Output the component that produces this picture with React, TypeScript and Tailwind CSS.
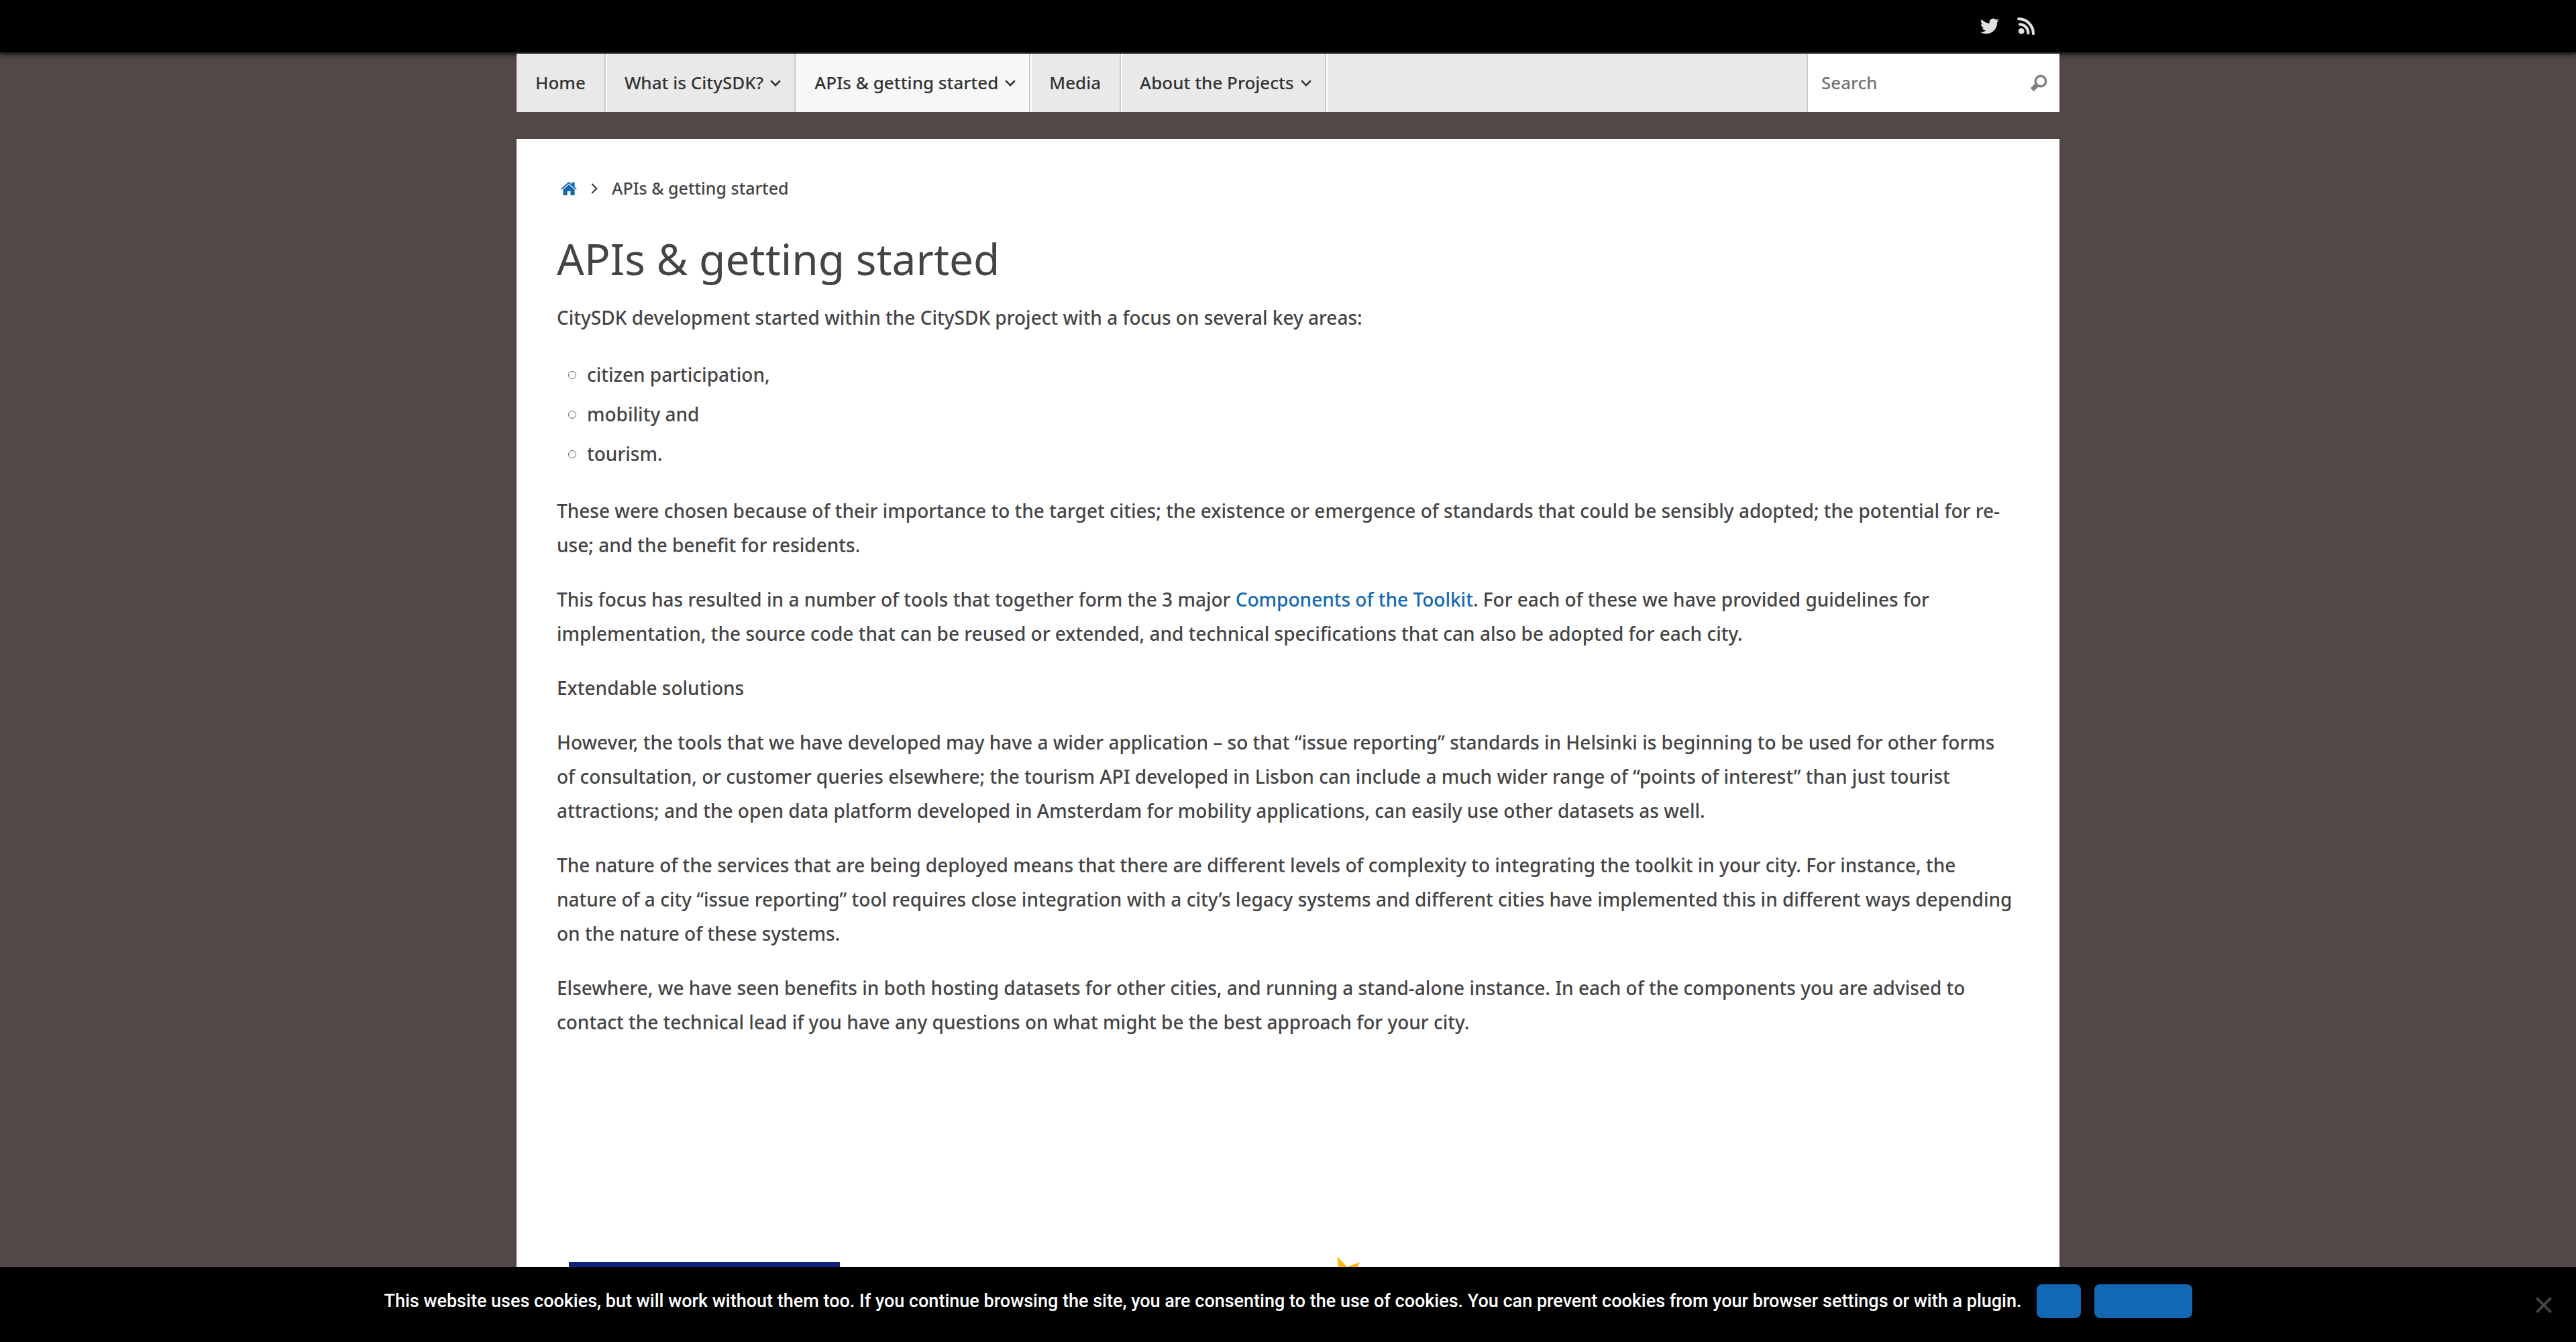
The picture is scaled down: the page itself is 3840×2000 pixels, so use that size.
import type { ReactNode } from "react";

type NavItem = { label: string; menu?: boolean; active?: boolean };

const navItems: NavItem[] = [
  { label: "Home" },
  { label: "What is CitySDK?", menu: true },
  { label: "APIs & getting started", menu: true, active: true },
  { label: "Media" },
  { label: "About the Projects", menu: true },
];

const areas = ["citizen participation,", "mobility and", "tourism."];

function ChevronDown() {
  return (
    <svg viewBox="0 0 16 10" className="ml-2.5 h-2.5 w-4 shrink-0" fill="none" stroke="currentColor" strokeWidth="2.6" aria-hidden="true">
      <path d="M1.2 1.2 8 8.2l6.8-7" />
    </svg>
  );
}

function ChevronRight() {
  return (
    <svg viewBox="0 0 10 16" className="h-4 w-2.5 shrink-0" fill="none" stroke="currentColor" strokeWidth="2.4" aria-hidden="true">
      <path d="M1.4 1 8.2 8l-6.8 7" />
    </svg>
  );
}

function HomeIcon() {
  return (
    <svg viewBox="0 0 24 20" className="h-5 w-6" fill="currentColor" aria-hidden="true">
      <path d="M11.3.5a1.1 1.1 0 0 1 1.4 0L16 3.4V.8h4.600v6.600l3.200 2.900-1.200 1.400L12 2.400 1.400 11.700.2 10.300z" />
      <path d="M12 4.1 20.6 11.6V19a1 1 0 0 1-1 1h-5.1v-6H9.6v6H4.4a1 1 0 0 1-1-1v-7.4z" />
    </svg>
  );
}

function TwitterIcon() {
  return (
    <svg viewBox="0 0 24 24" className="h-7 w-7" fill="currentColor" aria-hidden="true">
      <path d="M23.95 4.57a10 10 0 0 1-2.82.77 4.96 4.96 0 0 0 2.16-2.72c-.95.55-2 .95-3.13 1.18a4.92 4.92 0 0 0-8.38 4.48C7.69 8.1 4.07 6.13 1.64 3.16a4.82 4.82 0 0 0-.67 2.48c0 1.71.87 3.21 2.19 4.1a4.9 4.9 0 0 1-2.23-.62v.06a4.92 4.92 0 0 0 3.95 4.83 5 5 0 0 1-2.21.08 4.94 4.94 0 0 0 4.6 3.42A9.87 9.87 0 0 1 0 19.54a13.99 13.99 0 0 0 7.56 2.21c9.05 0 14-7.5 14-13.99 0-.21 0-.42-.02-.63a9.94 9.94 0 0 0 2.41-2.56z" />
    </svg>
  );
}

function RssIcon() {
  return (
    <svg viewBox="0 0 28 28" className="h-7 w-7" fill="none" stroke="currentColor" strokeLinecap="round" aria-hidden="true">
      <circle cx="7.2" cy="21.4" r="4.4" fill="currentColor" stroke="none" />
      <path d="M5 11.4A12.6 12.6 0 0 1 17.4 24.4" strokeWidth="4.2" />
      <path d="M3.2 3.2A21.8 21.8 0 0 1 25 25.2" strokeWidth="4.2" />
    </svg>
  );
}

function SearchIcon() {
  return (
    <svg viewBox="0 0 26 26" className="h-[26px] w-[26px]" fill="none" stroke="currentColor" aria-hidden="true">
      <circle cx="16" cy="10" r="7.8" strokeWidth="3.4" />
      <path d="M11.5 14.5 3.2 22.8" strokeWidth="7" />
    </svg>
  );
}

function P({ children }: { children: ReactNode }) {
  return <p className="mb-[30px]">{children}</p>;
}

export default function App() {
  return (
    <div className="h-screen overflow-hidden bg-[#524845] font-['Noto_Sans','Open_Sans',sans-serif] text-[28px] leading-[51px] font-medium text-[#444444]">
      <header className="relative h-20 border-b-2 border-[#222222] bg-black shadow-[0_0_8px_#000000]">
        <div className="mx-auto flex h-full max-w-[2300px] items-center justify-end gap-[26px] pr-9 text-[#e0e0e0]">
          <a href="#twitter" aria-label="Twitter"><TwitterIcon /></a>
          <a href="#rss" aria-label="RSS"><RssIcon /></a>
        </div>
      </header>

      <nav className="relative mx-auto flex h-[87px] max-w-[2300px] items-stretch bg-[#e9e9e9] text-[26px] text-[#333333]">
        {navItems.map((item) => (
          <a
            key={item.label}
            href="#menu"
            className={
              "flex items-center border-r-2 border-[#cccccc] pl-7 whitespace-nowrap shadow-[2px_0_0_#ffffff] " +
              (item.active ? "bg-[#f7f7f7] " : "") +
              (item.menu ? "pr-5" : "pr-7")
            }
          >
            {item.label}
            {item.menu && <ChevronDown />}
          </a>
        ))}
        <form className="ml-auto flex w-[377px] items-center border-l-2 border-[#cccccc] bg-white pr-[18px] pl-5">
          <input type="search" aria-label="Search" placeholder="Search" className="min-w-0 flex-1 bg-transparent outline-none placeholder:text-[#757575]" />
          <button type="button" aria-label="Submit search" className="text-[#808080]"><SearchIcon /></button>
        </form>
      </nav>

      <main className="mx-auto mt-10 max-w-[2300px] bg-white px-[60px] pt-12 pb-40">
        <div className="flex items-center pl-1.5 text-[25px]">
          <a href="#home" aria-label="Home" className="text-[#1268b3]"><HomeIcon /></a>
          <span className="mx-[21px]"><ChevronRight /></span>
          <span>APIs &amp; getting started</span>
        </div>

        <h1 className="mt-10 text-[64px] leading-[80px] font-normal">APIs &amp; getting started</h1>
        <p className="mt-[22px] mb-[30px]">CitySDK development started within the CitySDK project with a focus on several key areas:</p>
        <ul className="mb-[30px]">
          {areas.map((area) => (
            <li key={area} className="flex h-[59px] items-center pl-[17px]">
              <span className="mr-4 h-3 w-3 rounded-full border border-[#666666]" />
              {area}
            </li>
          ))}
        </ul>

        <P>
          These were chosen because of their importance to the target cities; the existence or emergence of standards that could be sensibly adopted; the potential for re-use; and the benefit for residents.
        </P>
        <P>
          This focus has resulted in a number of tools that together form the 3 major <a href="#toolkit" className="text-[#1268b3]">Components of the Toolkit</a>. For each of these we have provided guidelines for implementation, the source code that can be reused or extended, and technical specifications that can also be adopted for each city.
        </P>
        <P>Extendable solutions</P>
        <P>
          However, the tools that we have developed may have a wider application – so that “issue reporting” standards in Helsinki is beginning to be used for other forms of&nbsp;consultation, or customer queries elsewhere; the tourism API developed in Lisbon can include a much wider range of “points of interest” than just tourist attractions; and the open data platform developed in Amsterdam for mobility applications, can easily use other datasets as well.
        </P>
        <P>
          The nature of the services that are being deployed means that there are different levels of complexity to integrating the toolkit in your city. For instance, the nature of a city “issue reporting” tool requires close integration with a city’s legacy systems and different cities have implemented this in different ways depending on the nature of these systems.
        </P>
        <P>
          Elsewhere, we have seen benefits in both hosting datasets for other cities, and running a stand-alone instance. In each of the components you are advised to contact the technical lead if you have any questions on what might be the best approach for your city.
        </P>

        <div className="mt-[324px] flex items-start">
          <div className="mt-2 ml-[18px] h-60 w-[404px] bg-[#10207f]" />
          <svg viewBox="0 0 40 60" className="ml-[742px] h-[60px] w-10" fill="#fdb913" aria-hidden="true">
            <path d="M0 0 14 15 33 8 23 30 38 50 14 44 2 58z" />
          </svg>
        </div>
      </main>

      <aside className="fixed inset-x-0 bottom-0 flex h-28 items-center justify-center bg-black pb-2.5 font-['Roboto',sans-serif] text-[27px] text-white">
        <span>
          This website uses cookies, but will work without them too. If you continue browsing the site, you are consenting to the use of cookies. You can prevent cookies from your browser settings or with a plugin.
        </span>
        <button type="button" aria-label="Ok" className="ml-[22px] h-[50px] w-[66px] rounded-lg bg-[#1268b3]" />
        <button type="button" aria-label="Read more" className="ml-5 h-[50px] w-[146px] rounded-lg bg-[#1268b3]" />
        <button type="button" aria-label="Close" className="absolute top-[45px] right-9 text-[#444444]">
          <svg viewBox="0 0 24 24" className="h-6 w-6" fill="none" stroke="currentColor" strokeWidth="4" aria-hidden="true">
            <path d="M1.4 1.4 22.6 22.6M22.6 1.4 1.4 22.6" />
          </svg>
        </button>
      </aside>
    </div>
  );
}
